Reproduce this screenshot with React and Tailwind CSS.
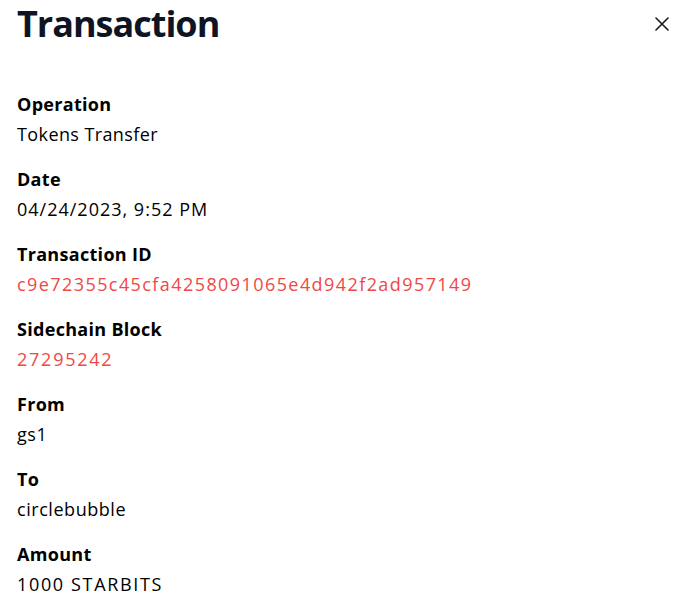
import React from "react";

const rows = [
  ["Operation", "Tokens Transfer", false, "tracking-[0.4px]"],
  ["Date", "04/24/2023, 9:52 PM", false, "tracking-[1px]"],
  ["Transaction ID", "c9e72355c45cfa4258091065e4d942f2ad957149", true, "tracking-[1.42px]"],
  ["Sidechain Block", "27295242", true, "tracking-[1.75px]"],
  ["From", "gs1", false, "tracking-[0.6px]"],
  ["To", "circlebubble", false, "tracking-[0.55px]"],
  ["Amount", "1000 STARBITS", false, "tracking-[1.65px]"],
];

export default function App() {
  return (
    <div className="w-[695px] h-[609px] bg-white overflow-hidden font-['Open_Sans',sans-serif] text-black">
      <div className="flex items-start justify-between pl-[17px] pr-[26px]">
        <h1 className="text-[36px] leading-[48px] font-bold text-[#0f1424] tracking-[-1px]">Transaction</h1>
        <button className="mt-[17px] w-[14px] h-[14px] flex items-center justify-center">
          <svg width="14" height="14" viewBox="0 0 14 14" fill="none" stroke="#1a1a1a" strokeWidth="1.6" strokeLinecap="round">
            <path d="M1 1L13 13M13 1L1 13" />
          </svg>
        </button>
      </div>
      <div className="pl-[17px] pt-[41px] flex flex-col gap-[15px]">
        {rows.map(([label, value, red, tr]) => (
          <div key={label} className="flex flex-col">
            <div className="text-[18px] leading-[30px] font-bold tracking-[0.3px]">{label}</div>
            <div className={"text-[18px] leading-[30px] " + tr + " " + (red ? "text-[#f04747]" : "text-black")}>{value}</div>
          </div>
        ))}
      </div>
    </div>
  );
}
